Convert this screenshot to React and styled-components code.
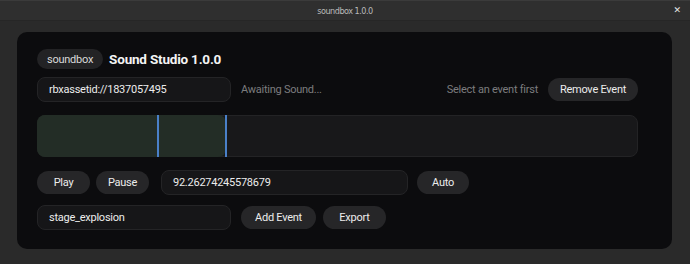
import React from "react"
import styled, { createGlobalStyle } from "styled-components"

const GlobalStyle = createGlobalStyle`
  html, body {
    margin: 0;
    padding: 0;
    background: #2a2a2a;
  }
  * {
    box-sizing: border-box;
  }
`

const Window = styled.div`
  width: 690px;
  height: 264px;
  display: flex;
  flex-direction: column;
  background: #2a2a2a;
  font-family: Roboto, "Noto Sans", sans-serif;
`

const TitleBar = styled.div`
  height: 21px;
  flex: none;
  position: relative;
  display: flex;
  align-items: center;
  justify-content: center;
  background: #2f2f2f;
  border-top: 1px solid #3b3b3b;
  border-bottom: 1px solid #262626;
  color: #b9b9b9;
  font-family: "Liberation Sans Narrow", "DejaVu Sans Condensed", sans-serif;
  font-size: 9px;
  letter-spacing: -0.5px;
`

const CloseButton = styled.span`
  position: absolute;
  right: 9px;
  top: 4px;
  color: #e6e6e6;
  font-family: "DejaVu Sans", sans-serif;
  font-size: 9px;
  font-weight: 700;
  letter-spacing: 0;
`

const Body = styled.div`
  flex: 1;
  padding: 11px 18px 15px 17px;
  display: flex;
`

const Panel = styled.div`
  flex: 1;
  background: #0c0c0e;
  border-radius: 10px;
  padding: 17px 20px 0 20px;
  display: flex;
  flex-direction: column;
`

const Content = styled.div`
  width: 601px;
  display: flex;
  flex-direction: column;
  font-size: 11px;
  letter-spacing: -0.25px;
`

const Row = styled.div`
  display: flex;
  align-items: center;
  gap: ${(p) => p.$gap ?? 10}px;
  margin-top: ${(p) => p.$top || 0}px;
`

const Pill = styled.span`
  height: 20px;
  padding: 0 10px;
  display: inline-flex;
  align-items: center;
  border-radius: 10px;
  background: #232325;
  color: #dadada;
`

const Heading = styled.h1`
  margin: 0 0 0 -4px;
  font-size: 13.5px;
  font-weight: 700;
  letter-spacing: -0.2px;
  color: #f4f4f4;
`

const Field = styled.div`
  width: ${(p) => p.$w}px;
  height: 25px;
  flex: none;
  display: flex;
  align-items: center;
  padding: 0 11px;
  background: #161618;
  border: 1px solid #242426;
  border-radius: 8px;
  color: #ececec;
`

const Button = styled.button`
  width: ${(p) => p.$w}px;
  height: 23px;
  flex: none;
  border: none;
  border-radius: 12px;
  background: #262628;
  color: #ececec;
  font-family: inherit;
  font-size: inherit;
  letter-spacing: inherit;
  padding: 0;
  margin: 0 0 0 ${(p) => p.$ml || 0}px;
`

const Muted = styled.span`
  color: #7c7c7e;
`

const Spacer = styled.div`
  flex: 1;
`

const Timeline = styled.div`
  position: relative;
  height: 42px;
  margin-top: 13px;
  background: #18181a;
  border: 1px solid #232325;
  border-radius: 8px;
`

const Region = styled.div`
  position: absolute;
  left: -1px;
  top: -1px;
  bottom: -1px;
  background: #232d26;
  border-radius: 8px;
`

const Marker = styled.div`
  position: absolute;
  top: -1px;
  bottom: -1px;
  width: 2px;
  background: #4a80c8;
`

export default function App() {
  return (
    <Window>
      <GlobalStyle />
      <TitleBar>
        soundbox 1.0.0
        <CloseButton>✕</CloseButton>
      </TitleBar>
      <Body>
        <Panel>
          <Content>
            <Row $gap={10}>
              <Pill>soundbox</Pill>
              <Heading>Sound Studio 1.0.0</Heading>
            </Row>
            <Row $top={8}>
              <Field $w={194}>rbxassetid://1837057495</Field>
              <Muted>Awaiting Sound...</Muted>
              <Spacer />
              <Muted>Select an event first</Muted>
              <Button $w={90}>Remove Event</Button>
            </Row>
            <Timeline>
              <Region style={{ width: 189 }} />
              <Marker style={{ left: 119 }} />
              <Marker style={{ left: 187 }} />
            </Timeline>
            <Row $top={13} $gap={0}>
              <Button $w={53}>Play</Button>
              <Button $w={53} $ml={6}>Pause</Button>
              <Field $w={247} style={{ marginLeft: 12 }}>92.26274245578679</Field>
              <Button $w={52} $ml={9}>Auto</Button>
            </Row>
            <Row $top={10} $gap={0}>
              <Field $w={194}>stage_explosion</Field>
              <Button $w={75} $ml={10}>Add Event</Button>
              <Button $w={63} $ml={7}>Export</Button>
            </Row>
          </Content>
        </Panel>
      </Body>
    </Window>
  )
}
